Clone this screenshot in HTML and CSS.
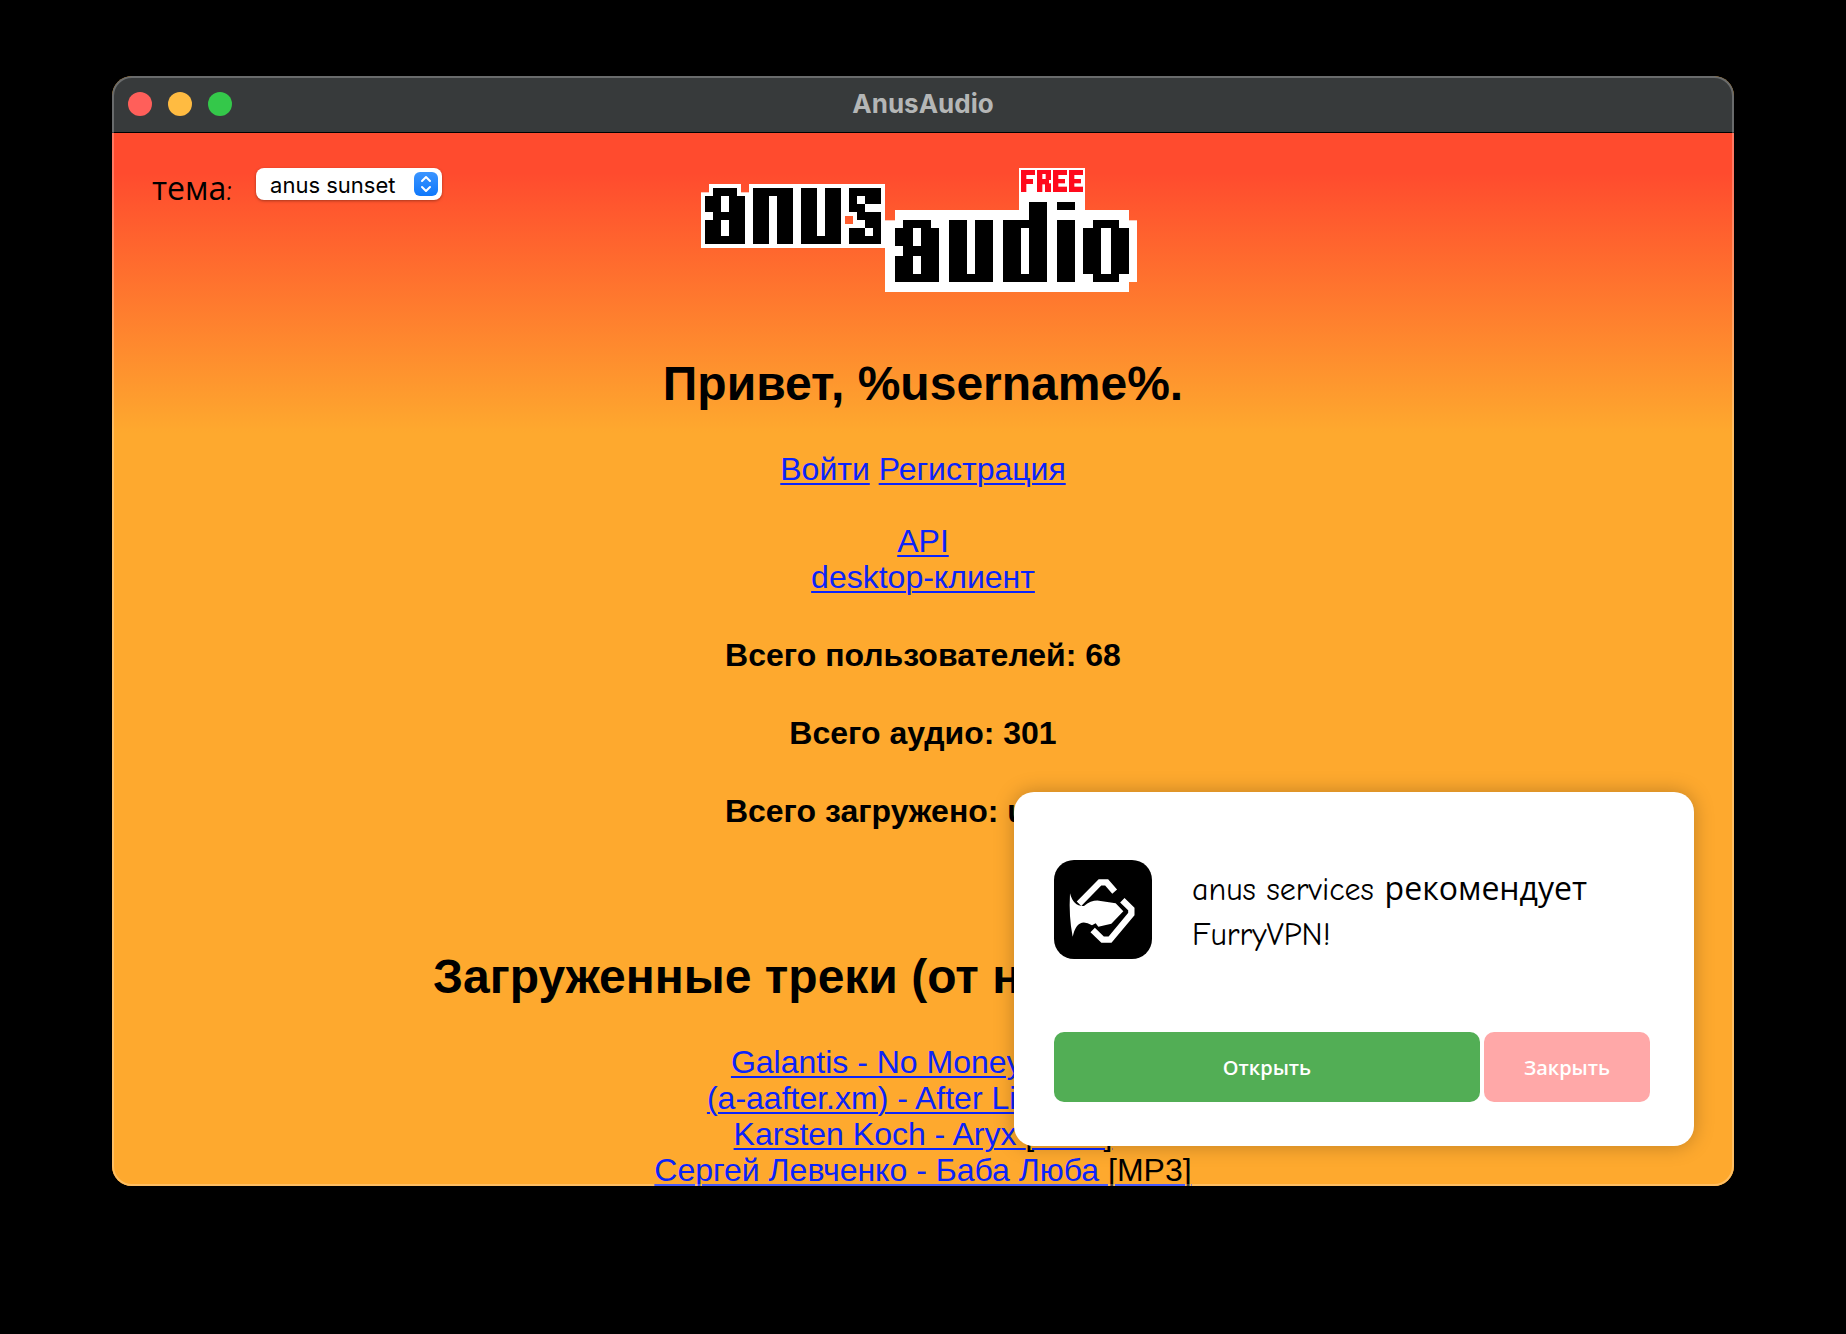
FILE: index.html
```html
<!DOCTYPE html>
<html lang="ru">
<head>
<meta charset="utf-8">
<title>AnusAudio</title>
<link rel="stylesheet" href="styles.css">
</head>
<body>
<div class="window">
  <header class="titlebar">
    <div class="lights">
      <button class="light light-close" aria-label="Закрыть окно"></button>
      <button class="light light-min" aria-label="Свернуть"></button>
      <button class="light light-max" aria-label="Развернуть"></button>
    </div>
    <span class="window-title">AnusAudio</span>
  </header>
  <main class="page">
    <div class="theme">
      <label for="theme">тема:</label>
      <span class="select-wrap">
        <select id="theme"><option>anus sunset</option></select>
        <svg class="select-arrows" viewBox="0 0 24 24" aria-hidden="true"><path d="M8 9l4-4 4 4M8 15l4 4 4-4"/></svg>
      </span>
    </div>
    <svg class="logo" viewBox="33 24 1332 372" role="img" aria-label="anus audio free">
      <g fill="#fff">
        <rect x="57" y="72" width="96" height="96"/>
        <rect x="33" y="97" width="432" height="167"/>
        <rect x="177" y="72" width="408" height="96"/>
        <rect x="489" y="150" width="96" height="114"/>
        <rect x="460" y="192" width="40" height="72"/>
        <rect x="585" y="181" width="756" height="185"/>
        <rect x="615" y="150" width="702" height="60"/>
        <rect x="585" y="340" width="732" height="56"/>
        <rect x="987" y="24" width="198" height="140"/>
      </g>
      <g fill="#000">
        <rect x="69" y="84" width="72" height="168"/><rect x="45" y="108" width="120" height="48"/><rect x="45" y="180" width="120" height="72"/><rect x="141" y="108" width="24" height="144"/>
        <rect x="189" y="84" width="120" height="24"/><rect x="189" y="84" width="48" height="168"/><rect x="261" y="84" width="48" height="168"/>
        <rect x="333" y="84" width="48" height="168"/><rect x="405" y="84" width="48" height="168"/><rect x="333" y="228" width="120" height="24"/>
        <rect x="477" y="84" width="96" height="48"/><rect x="477" y="132" width="48" height="24"/><rect x="501" y="156" width="72" height="24"/><rect x="525" y="180" width="48" height="24"/><rect x="477" y="204" width="96" height="48"/>
        <rect x="639" y="180" width="84" height="186"/><rect x="615" y="204" width="132" height="54"/><rect x="615" y="288" width="132" height="78"/><rect x="723" y="204" width="24" height="162"/>
        <rect x="777" y="180" width="54" height="186"/><rect x="855" y="180" width="54" height="186"/><rect x="777" y="342" width="132" height="24"/>
        <rect x="1017" y="126" width="54" height="240"/><rect x="939" y="180" width="132" height="186"/>
        <rect x="1101" y="126" width="54" height="24"/><rect x="1101" y="180" width="54" height="186"/>
        <rect x="1209" y="180" width="78" height="186"/><rect x="1179" y="204" width="138" height="138"/>
      </g>
      <g fill="#fff">
        <rect x="93" y="108" width="24" height="48"/><rect x="93" y="180" width="24" height="48"/>
        <rect x="501" y="108" width="24" height="24"/><rect x="525" y="204" width="24" height="24"/>
        <rect x="669" y="204" width="24" height="54"/><rect x="669" y="288" width="24" height="54"/>
        <rect x="993" y="204" width="24" height="138"/><rect x="1233" y="204" width="30" height="138"/>
      </g>
      <g fill="#ff0a1c">
        <rect x="993" y="30" width="16" height="66"/><rect x="993" y="30" width="42" height="15"/><rect x="993" y="57" width="36" height="15"/>
        <rect x="1041" y="30" width="16" height="66"/><rect x="1041" y="30" width="42" height="12"/><rect x="1067" y="30" width="16" height="30"/><rect x="1041" y="57" width="36" height="16"/><rect x="1065" y="70" width="18" height="26"/>
        <rect x="1089" y="30" width="16" height="66"/><rect x="1089" y="30" width="42" height="15"/><rect x="1089" y="57" width="36" height="13"/><rect x="1089" y="80" width="42" height="16"/>
        <rect x="1137" y="30" width="16" height="66"/><rect x="1137" y="30" width="42" height="15"/><rect x="1137" y="57" width="36" height="13"/><rect x="1137" y="80" width="42" height="16"/>
      </g>
    </svg>
    <h1>Привет, %username%.</h1>
    <p><a href="#">Войти</a> <a href="#">Регистрация</a></p>
    <p><a href="#">API</a><br><a href="#">desktop-клиент</a></p>
    <h2>Всего пользователей: 68</h2>
    <h2>Всего аудио: 301</h2>
    <h2>Всего загружено: undef 0</h2>
    <h1 class="tracks-title">Загруженные треки (от новых к старым):</h1>
    <ul class="tracks">
      <li><a href="#">Galantis - No Money </a><a class="format" href="#">[MP3]</a></li>
      <li><a href="#">(a-aafter.xm) - After Life </a><a class="format" href="#">[WAV]</a></li>
      <li><a href="#">Karsten Koch - Aryx </a><a class="format" href="#">[WAV]</a></li>
      <li><a href="#">Сергей Левченко - Баба Люба </a><a class="format" href="#">[MP3]</a></li>
    </ul>
  </main>
  <aside class="promo">
    <div class="promo-body">
      <svg class="promo-icon" viewBox="0 0 294 297" aria-hidden="true">
        <rect width="294" height="297" rx="60"/>
        <path fill="#fff" d="M48 100Q58 140 90 138Q112 120 135 122L185 130L208 154L172 191L133 200L125 190L114 196Q70 168 56 230Q44 170 48 100Z"/>
        <path fill="none" stroke="#fff" stroke-width="19" d="M75 131L138 67H158L182 95M205 121L232 147V162L168 239H146L116 210"/>
      </svg>
      <p>anus services рекомендует FurryVPN!</p>
    </div>
    <div class="promo-actions">
      <button class="open">Открыть</button>
      <button class="close">Закрыть</button>
    </div>
  </aside>
</div>
</body>
</html>
```
FILE: styles.css
```css
* { box-sizing: border-box; }

body {
  margin: 0;
  min-height: 100vh;
  padding: 76px 112px 148px;
  display: flex;
  background: #000;
  color: #000;
  font: 32px/36px "Liberation Sans", Arial, sans-serif;
}

.window {
  position: relative;
  flex: 1;
  display: flex;
  flex-direction: column;
  height: calc(100vh - 224px);
  overflow: hidden;
  border-radius: 20px;
  background: #fea92e;
}

.window::after {
  content: "";
  position: absolute;
  inset: 0;
  border: 2px solid rgba(255, 255, 255, 0.25);
  border-radius: 20px;
  pointer-events: none;
}

.titlebar {
  flex: none;
  display: grid;
  grid-template-columns: 1fr auto 1fr;
  align-items: center;
  height: 57px;
  padding: 0 16px;
  background: #373a3b;
  border-bottom: 1px solid #000;
}

.lights { display: flex; gap: 16px; }

.light {
  width: 24px;
  height: 24px;
  padding: 0;
  border: 0;
  border-radius: 50%;
}

.light-close { background: #ff5f5a; }
.light-min { background: #ffbb41; }
.light-max { background: #34c84a; }

.window-title {
  color: #b4b6b6;
  font: bold 26px/32px Inter, sans-serif;
}

.page {
  flex: 1;
  min-height: 0;
  overflow: hidden;
  padding-top: 35px;
  text-align: center;
  background: linear-gradient(#ff4b2e 0, #ff4b2e 40px, #fea92e 300px);
}

.theme {
  position: absolute;
  top: 84px;
  left: 40px;
  display: flex;
  align-items: center;
  gap: 24px;
  font-family: "Comic Sans MS", "Comic Neue", "Open Sans", sans-serif;
  font-weight: 500;
}

.theme label { padding-top: 12px; }

.select-wrap { position: relative; display: flex; }

.theme select {
  appearance: none;
  width: 186px;
  height: 32px;
  padding: 2px 36px 0 14px;
  border: 0;
  border-radius: 8px;
  background: #fff;
  box-shadow: 0 1px 3px rgba(0, 0, 0, 0.35);
  color: #000;
  font: 22px/30px Inter, sans-serif;
}

.select-arrows {
  position: absolute;
  top: 4px;
  right: 4px;
  width: 24px;
  height: 24px;
  border-radius: 6px;
  background: linear-gradient(#3b95ff, #0f78fb);
  fill: none;
  stroke: #fff;
  stroke-width: 2;
  stroke-linecap: round;
  stroke-linejoin: round;
  pointer-events: none;
}

.logo {
  display: block;
  width: 444px;
  height: 124px;
  margin: 0 auto 64px;
}

h1 { margin: 0; font-size: 48px; line-height: 56px; }
p { margin: 0; }
a { color: #0b24fb; text-decoration-thickness: 2px; text-underline-offset: 3px; }
h1 + p { margin-top: 39px; }
p + p { margin-top: 36px; }
h2 { margin: 42px 0 0; font-size: 32px; line-height: 36px; }

.tracks-title { margin-top: 120px; }
.tracks { margin: 39px 0 0; padding: 0; list-style: none; }
.format { color: #000; text-decoration-color: #0b24fb; }

.promo {
  position: absolute;
  right: 40px;
  bottom: 40px;
  width: 680px;
  padding: 68px 44px 44px 40px;
  border-radius: 20px;
  background: #fff;
  box-shadow: 0 0 20px rgba(0, 0, 0, 0.25);
  font-family: "Comic Sans MS", "Comic Neue", "Open Sans", sans-serif;
  font-weight: 500;
}

.promo-body {
  display: flex;
  align-items: center;
  gap: 40px;
  margin-bottom: 73px;
}

.promo-icon { flex: none; width: 98px; height: 99px; }
.promo-body p { padding-top: 4px; line-height: 45px; }
.promo-actions { display: flex; gap: 4px; }

.promo-actions button {
  height: 70px;
  padding: 4px 0 0;
  border: 0;
  border-radius: 10px;
  color: #fff;
  font: 600 20px/32px "Comic Sans MS", "Comic Neue", "Open Sans", sans-serif;
}

.promo-actions .open { flex: 1; background: #52ae55; }
.promo-actions .close { width: 166px; background: #ffa8a8; }
```
